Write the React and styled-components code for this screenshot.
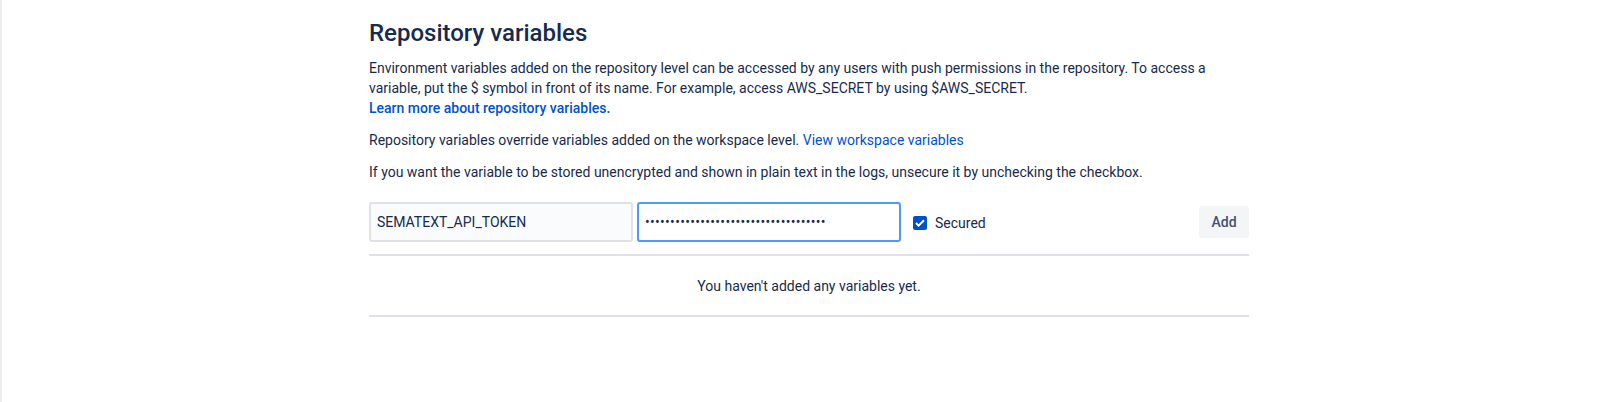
import React from 'react';
import styled, { createGlobalStyle } from 'styled-components';

const colors = {
  text: '#172B4D',
  subtle: '#42526E',
  link: '#0052CC',
  border: '#DFE1E6',
  inputBg: '#FAFBFC',
  focus: '#4C9AFF',
  buttonBg: '#F4F5F7',
  rail: '#EBECF0',
};

const GlobalStyle = createGlobalStyle`
  body {
    margin: 0;
    background: #fff;
    font-family: Roboto, "Liberation Sans", sans-serif;
    color: ${colors.text};
  }
`;

const Page = styled.div`
  min-height: 100vh;
  border-left: 2px solid ${colors.rail};
  display: flex;
  justify-content: center;
`;

const Section = styled.section`
  width: 880px;
  padding-top: 19px;
  h2 {
    margin: 0 0 11px;
    font-size: 24px;
    line-height: 28px;
    font-weight: 500;
    color: ${colors.text};
  }
`;

const Text = styled.p`
  margin: 0 0 12px;
  font-size: 14px;
  line-height: 20px;
  color: ${colors.text};
  a {
    color: ${colors.link};
    text-decoration: none;
    font-weight: ${(props) => (props.boldLink ? 500 : 400)};
  }
`;

const Form = styled.form`
  display: flex;
  align-items: center;
  margin-top: 20px;
  padding-bottom: 12px;
  border-bottom: 2px solid ${colors.border};
`;

const Field = styled.input`
  box-sizing: border-box;
  width: 264px;
  height: 40px;
  margin-right: 4px;
  padding: 0 6px;
  border: 2px solid ${(props) => (props.focused ? colors.focus : colors.border)};
  border-radius: 3px;
  background: ${(props) => (props.focused ? '#fff' : colors.inputBg)};
  font-family: inherit;
  font-size: 14px;
  color: ${colors.text};
  outline: none;
  &[type='password'] {
    letter-spacing: 0.3px;
  }
`;

const CheckLabel = styled.label`
  display: flex;
  align-items: center;
  gap: 8px;
  margin-left: 8px;
  padding-top: 2px;
  font-size: 14px;
  color: ${colors.text};
`;

const Box = styled.span`
  width: 14px;
  height: 14px;
  border-radius: 2px;
  background: ${colors.link};
  display: flex;
  align-items: center;
  justify-content: center;
`;

const AddButton = styled.button`
  margin-left: auto;
  width: 50px;
  height: 32px;
  border: none;
  border-radius: 3px;
  background: ${colors.buttonBg};
  color: ${colors.subtle};
  font-family: inherit;
  font-size: 14px;
  font-weight: 500;
`;

const Empty = styled.div`
  padding: 20px 0 19px;
  text-align: center;
  font-size: 14px;
  line-height: 20px;
  border-bottom: 2px solid ${colors.border};
`;

const App = () => (
  <>
    <GlobalStyle />
    <Page>
      <Section>
        <h2>Repository variables</h2>
        <Text boldLink>
          Environment variables added on the repository level can be accessed by any users with push
          permissions in the repository. To access a variable, put the $ symbol in front of its name.
          For example, access AWS_SECRET by using $AWS_SECRET.
          <br />
          <a href="#repo">Learn more about repository variables.</a>
        </Text>
        <Text>
          Repository variables override variables added on the workspace level.{' '}
          <a href="#workspace">View workspace variables</a>
        </Text>
        <Text>
          If you want the variable to be stored unencrypted and shown in plain text in the logs,
          unsecure it by unchecking the checkbox.
        </Text>
        <Form onSubmit={(e) => e.preventDefault()}>
          <Field type="text" defaultValue="SEMATEXT_API_TOKEN" />
          <Field type="password" focused defaultValue={'x'.repeat(36)} />
          <CheckLabel>
            <Box>
              <svg width="10" height="8" viewBox="0 0 10 8">
                <path d="M1 4l2.6 2.6L9 1.2" fill="none" stroke="#fff" strokeWidth="2" />
              </svg>
            </Box>
            Secured
          </CheckLabel>
          <AddButton type="submit">Add</AddButton>
        </Form>
        <Empty>You haven&apos;t added any variables yet.</Empty>
      </Section>
    </Page>
  </>
);

export default App;
